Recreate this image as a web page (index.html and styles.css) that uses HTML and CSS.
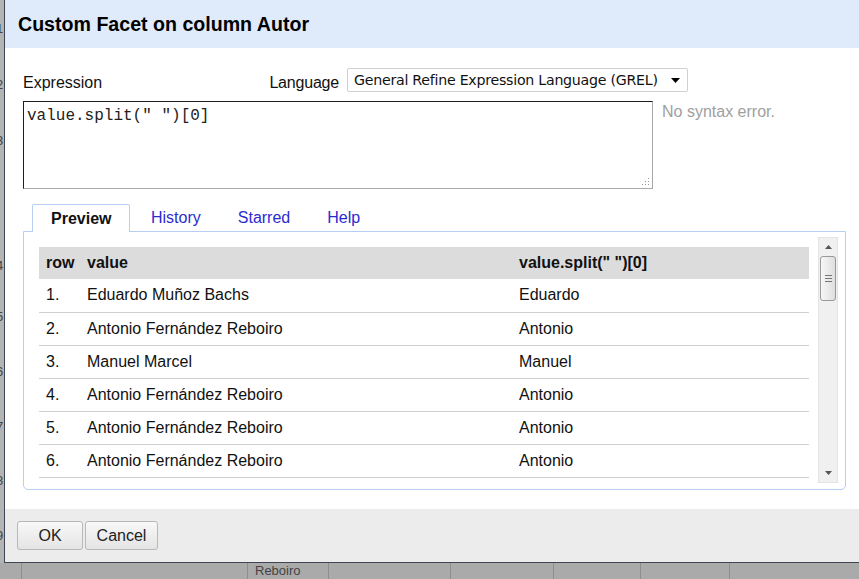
FILE: index.html
```html
<!DOCTYPE html>
<html>
<head>
<meta charset="utf-8">
<link rel="stylesheet" href="styles.css">
</head>
<body>
<div class="desk">
  <div class="desk-rows">
    <div class="desk-row r1"><span class="rn">1</span></div>
    <div class="desk-row r2"><span class="rn">2</span></div>
    <div class="desk-row r3"><span class="rn">3</span></div>
    <div class="desk-row r4"><span class="rn">4</span></div>
    <div class="desk-row r5"><span class="rn">5</span></div>
    <div class="desk-row r6"><span class="rn">6</span></div>
    <div class="desk-row r7"><span class="rn">7</span></div>
    <div class="desk-row r8"><span class="rn">8</span></div>
    <div class="desk-row r9"><span class="rn">9</span></div>
  </div>
  <div class="desk-bottom">
    <div class="dc c1"></div>
    <div class="dc c2"></div>
    <div class="dc c3">Reboiro</div>
    <div class="dc c4"></div>
    <div class="dc c5"></div>
    <div class="dc c6"></div>
    <div class="dc c7"></div>
    <div class="dc c8"></div>
  </div>
</div>

<div class="dialog">
  <div class="dlg-head">Custom Facet on column Autor</div>
  <div class="dlg-body">
    <div class="lang-row">
      <span class="lbl">Expression</span>
      <div class="lang">
        <span class="lbl">Language</span>
        <div class="select">
          <span>General Refine Expression Language (GREL)</span>
          <svg class="caret" width="9" height="5" viewBox="0 0 9 5"><path d="M0 0H9L4.5 5Z" fill="#000"/></svg>
        </div>
      </div>
    </div>
    <div class="expr-row">
      <div class="textarea">
        <span class="code">value.split(" ")[0]</span>
        <svg class="grip" width="9" height="9" viewBox="0 0 9 9">
          <g fill="#999">
            <rect x="7" y="1" width="1" height="1"/>
            <rect x="4" y="4" width="1" height="1"/><rect x="7" y="4" width="1" height="1"/>
            <rect x="1" y="7" width="1" height="1"/><rect x="4" y="7" width="1" height="1"/><rect x="7" y="7" width="1" height="1"/>
          </g>
        </svg>
      </div>
      <div class="status">No syntax error.</div>
    </div>
    <div class="tabs">
      <div class="tabbar">
        <div class="tab active">Preview</div>
        <div class="tab">History</div>
        <div class="tab">Starred</div>
        <div class="tab">Help</div>
      </div>
      <div class="panel">
        <div class="grid-wrap">
          <table class="grid">
            <colgroup>
              <col class="col-row">
              <col class="col-val">
              <col class="col-split">
            </colgroup>
            <thead>
              <tr><th>row</th><th>value</th><th>value.split(" ")[0]</th></tr>
            </thead>
            <tbody>
              <tr><td>1.</td><td>Eduardo Muñoz Bachs</td><td>Eduardo</td></tr>
              <tr><td>2.</td><td>Antonio Fernández Reboiro</td><td>Antonio</td></tr>
              <tr><td>3.</td><td>Manuel Marcel</td><td>Manuel</td></tr>
              <tr><td>4.</td><td>Antonio Fernández Reboiro</td><td>Antonio</td></tr>
              <tr><td>5.</td><td>Antonio Fernández Reboiro</td><td>Antonio</td></tr>
              <tr><td>6.</td><td>Antonio Fernández Reboiro</td><td>Antonio</td></tr>
            </tbody>
          </table>
        </div>
        <div class="scrollbar">
          <div class="sb-btn">
            <svg width="7" height="4" viewBox="0 0 7 4"><path d="M0 4H7L3.5 0Z" fill="#555"/></svg>
          </div>
          <div class="sb-thumb">
            <span class="gl"></span><span class="gl"></span><span class="gl"></span>
          </div>
          <div class="sb-track"></div>
          <div class="sb-btn">
            <svg width="7" height="4" viewBox="0 0 7 4"><path d="M0 0H7L3.5 4Z" fill="#555"/></svg>
          </div>
        </div>
      </div>
    </div>
  </div>
  <div class="dlg-foot">
    <button class="btn ok">OK</button>
    <button class="btn cancel">Cancel</button>
  </div>
</div>
</body>
</html>
```

FILE: styles.css
```css
* { box-sizing: border-box; }

html, body {
  margin: 0;
  padding: 0;
}

body {
  width: 859px;
  height: 579px;
  overflow: hidden;
  position: relative;
  background: #ababab;
  font-family: "Liberation Sans", Arial, sans-serif;
  font-size: 16px;
  color: #111;
}

/* background spreadsheet */
.desk {
  height: 579px;
  display: flex;
  flex-direction: column;
}

.desk-rows {
  height: 563px;
  display: flex;
  flex-direction: column;
  width: 5px;
  background: #b4b4b4;
}

.desk-row {
  display: flex;
  align-items: center;
  overflow: hidden;
}
.r1 { height: 57px; }
.r2 { height: 54px; }
.r3 { height: 58px; }
.r4 { height: 120px; }
.r5 { height: 54px; }
.r6 { height: 56px; }
.r7 { height: 54px; }
.r8 { height: 54px; }
.r9 { height: 56px; }
.r4 { align-items: flex-end; padding-bottom: 16px; }

.rn {
  font-size: 13px;
  color: #444;
  margin-left: -4px;
}

.desk-bottom {
  display: flex;
  height: 16px;
  background: #aaaaaa;
}
.dc {
  border-right: 1px solid #8e8e8e;
  font-size: 13px;
  color: #444;
  line-height: 16px;
  padding-left: 7px;
}
.c1 { width: 22px; }
.c2 { width: 226px; }
.c3 { width: 81px; }
.c4 { width: 122px; }
.c5 { width: 103px; }
.c6 { width: 87px; }
.c7 { width: 89px; }
.c8 { flex: 1; border-right: none; }

/* dialog */
.dialog {
  position: absolute;
  left: 4px;
  top: 0;
  width: 855px;
  height: 563px;
  border-left: 1px solid #3d4652;
  border-bottom: 1px solid #3d4652;
  background: #fff;
  display: flex;
  flex-direction: column;
}

.dlg-head {
  height: 48px;
  background: #dfeafb;
  font-weight: bold;
  font-size: 19.6px;
  padding-left: 13px;
  line-height: 49px;
  color: #000;
}

.dlg-body {
  height: 461px;
  padding: 20px 0 0 18px;
}

.lang-row {
  display: flex;
  align-items: center;
  width: 665px;
  justify-content: space-between;
  height: 24px;
}

.lbl {
  color: #111;
  padding-top: 5px;
}

.lang {
  display: flex;
  align-items: center;
  gap: 8px;
}

.lang .lbl {
  letter-spacing: -0.2px;
}

.select {
  width: 341px;
  height: 24px;
  border: 1px solid #d0d0d0;
  border-radius: 2px;
  display: flex;
  align-items: center;
  justify-content: space-between;
  padding: 0 7px 0 6px;
  font-family: "DejaVu Sans", Tahoma, sans-serif;
  font-size: 14.2px;
  letter-spacing: -0.26px;
  color: #111;
}

.expr-row {
  display: flex;
  margin-top: 9px;
  gap: 9px;
}

.textarea {
  width: 630px;
  height: 88px;
  border-style: solid;
  border-width: 1px;
  border-color: #1e1e1e #a8a8a8 #a8a8a8 #1e1e1e;
  position: relative;
  padding: 4px 3px;
}

.code {
  font-family: "Liberation Mono", "Courier New", monospace;
  font-size: 16px;
  color: #222;
  line-height: 18px;
}

.grip {
  position: absolute;
  right: 2px;
  bottom: 2px;
}

.status {
  color: #a0a0a0;
  line-height: 22px;
}

.tabs {
  margin-top: 15px;
  width: 823px;
}

.tabbar {
  display: flex;
  padding-left: 9px;
  height: 28px;
  position: relative;
  z-index: 1;
}

.tab {
  height: 28px;
  padding: 0 16.5px;
  margin-right: 4px;
  line-height: 28px;
  color: #2b2bd0;
}

.tab.active {
  font-weight: bold;
  color: #111;
  background: #fff;
  border: 1px solid #b7cdf4;
  border-bottom: none;
  border-radius: 2px 2px 0 0;
  padding: 0 18px 0 18px;
}

.panel {
  margin-top: -1px;
  height: 259px;
  border: 1px solid #b7cdf4;
  border-radius: 0 0 5px 5px;
  display: flex;
  padding: 15px 6px 0 15px;
}

.grid-wrap {
  width: 770px;
}

.grid {
  width: 770px;
  border-collapse: collapse;
  table-layout: fixed;
}

.col-row { width: 41px; }
.col-val { width: 432px; }
.col-split { width: 297px; }

.grid th {
  background: #dcdcdc;
  height: 32px;
  text-align: left;
  font-weight: bold;
  padding: 0 7px;
}

.grid td {
  height: 33px;
  padding: 0 7px;
  border-bottom: 1px solid #cfcfcf;
  color: #111;
  white-space: nowrap;
}

.scrollbar {
  margin-left: 9px;
  margin-top: -10px;
  width: 20px;
  height: 246px;
  background: #f0f0f0;
  border: 1px solid #e4e4e4;
  display: flex;
  flex-direction: column;
}

.sb-btn {
  height: 18px;
  display: flex;
  align-items: center;
  justify-content: center;
}

.sb-thumb {
  height: 45px;
  margin: 0 1px;
  border: 1px solid #9a9a9a;
  border-radius: 3px;
  background: linear-gradient(to right, #f7f7f7, #dedede);
  display: flex;
  flex-direction: column;
  align-items: center;
  justify-content: center;
  gap: 2px;
}

.gl {
  width: 7px;
  height: 1px;
  background: #777;
}

.sb-track {
  flex: 1;
}

.dlg-foot {
  flex: 1;
  background: #ececec;
  display: flex;
  align-items: flex-start;
  padding: 12px 0 0 12px;
  gap: 2px;
}

.btn {
  height: 29px;
  border: 1px solid #b8b8b8;
  border-radius: 3px;
  background: linear-gradient(to bottom, #f8f8f8, #e4e4e4);
  font-family: "Liberation Sans", Arial, sans-serif;
  font-size: 16px;
  color: #222;
  padding: 0;
}

.ok { width: 66px; }
.cancel { width: 73px; }
```
